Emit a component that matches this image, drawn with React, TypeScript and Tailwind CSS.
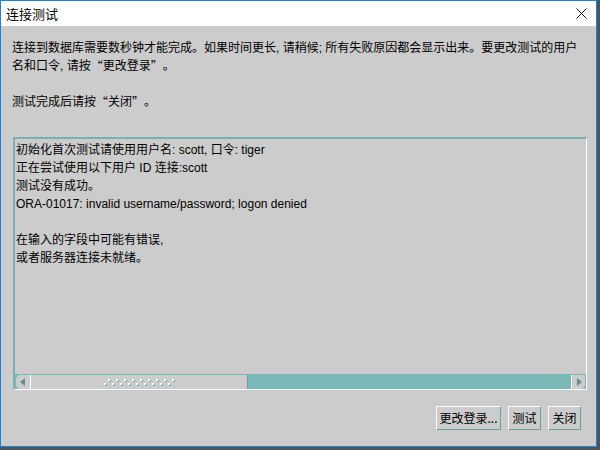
import React from "react";

const cjk = { fontFamily: '"Noto Sans CJK SC", "Liberation Sans", sans-serif' };
const mix = { fontFamily: '"Liberation Sans", "Noto Sans CJK SC", sans-serif' };

function Q({ children, open }: { children: React.ReactNode; open?: boolean }) {
  return (
    <span
      className={`inline-block w-[12px] h-[18px] leading-[18px] align-top overflow-hidden ${open ? "text-right" : "text-left"}`}
      style={cjk}
    >
      {children}
    </span>
  );
}

function Btn({ children, w }: { children: React.ReactNode; w: string }) {
  return (
    <button
      className={`${w} h-[24px] bg-[#cccccc] border border-t-white border-l-white border-b-[#6f9f9f] border-r-[#6f9f9f] text-[12px] text-black flex items-center justify-center leading-none`}
      style={cjk}
    >
      {children}
    </button>
  );
}

export default function App() {
  const dots = Array.from({ length: 9 });
  return (
    <div className="w-[600px] h-[450px] bg-[#4b555a] overflow-hidden">
      <div className="w-[597px] h-[447px] border border-[#1883d7] flex flex-col bg-[#cccccc]">
        {/* title bar */}
        <div className="h-[25px] bg-white flex items-center justify-between pl-[5px] pr-[9px] shrink-0">
          <span className="text-[13px] text-black leading-none" style={cjk}>连接测试</span>
          <svg width="11" height="11" viewBox="0 0 11 11">
            <path d="M0.5 0.5 L10.5 10.5 M10.5 0.5 L0.5 10.5" stroke="#111" strokeWidth="1" />
          </svg>
        </div>
        {/* body */}
        <div className="flex-1 flex flex-col pt-[13px]">
          <div className="pl-[11px] text-[12px] leading-[18px] text-black" style={mix}>
            <div className="h-[18px] whitespace-nowrap">连接到数据库需要数秒钟才能完成。如果时间更长, 请稍候; 所有失败原因都会显示出来。要更改测试的用户</div>
            <div className="h-[18px] whitespace-nowrap">名和口令, 请按<Q open>“</Q>更改登录<Q>”</Q>。</div>
            <div className="h-[18px]">&nbsp;</div>
            <div className="h-[18px] whitespace-nowrap">测试完成后请按<Q open>“</Q>关闭<Q>”</Q>。</div>
          </div>
          {/* text area */}
          <div className="ml-[12px] mt-[26px] w-[574px] h-[253px] flex flex-col border-t-2 border-l-2 border-t-[#79b1b0] border-l-[#79b1b0] border-b border-r border-b-white border-r-white">
            <div className="flex-1 pt-[2px] pl-[1px] text-[12px] leading-[18px] text-black" style={mix}>
              <div>初始化首次测试请使用用户名: scott, 口令: tiger</div>
              <div>正在尝试使用以下用户 ID 连接:scott</div>
              <div>测试没有成功。</div>
              <div>ORA-01017: invalid username/password; logon denied</div>
              <div>&nbsp;</div>
              <div>在输入的字段中可能有错误,</div>
              <div>或者服务器连接未就绪。</div>
            </div>
            <div className="h-[15px] flex shrink-0 border-t border-[#79b9b7] bg-[#79b9b7]">
              <div className="w-[15px] h-full bg-[#cccccc] rounded-l-[5px] border-l border-[#79b9b7] flex items-center justify-center">
                <svg width="6" height="8" viewBox="0 0 6 8"><path d="M5 0 L0 4 L5 8 Z" fill="#6a8e8e" /></svg>
              </div>
              <div className="w-[218px] h-full bg-[#cccccc] border-l border-white border-r border-r-[#7a9a9a] flex flex-col items-center justify-center gap-[2px]">
                <div className="flex gap-[6px] pl-[4px]">
                  {dots.map((_, i) => (
                    <span key={i} className="w-[2px] h-[2px] bg-white shadow-[1px_1px_0_#6fb0ae]" />
                  ))}
                </div>
                <div className="flex gap-[6px] pr-[4px]">
                  {dots.map((_, i) => (
                    <span key={i} className="w-[2px] h-[2px] bg-white shadow-[1px_1px_0_#6fb0ae]" />
                  ))}
                </div>
              </div>
              <div className="flex-1 bg-[#79b9b7]" />
              <div className="w-[14px] h-full bg-[#cccccc] border-l border-white rounded-br-[4px] flex items-center justify-center">
                <svg width="6" height="8" viewBox="0 0 6 8"><path d="M1 0 L6 4 L1 8 Z" fill="#6a8e8e" /></svg>
              </div>
              <div className="w-[1px]" />
            </div>
          </div>
          {/* buttons */}
          <div className="flex justify-end gap-[7px] pr-[15px] mt-[16px]">
            <Btn w="w-[65px]">更改登录...</Btn>
            <Btn w="w-[33px]">测试</Btn>
            <Btn w="w-[33px]">关闭</Btn>
          </div>
        </div>
      </div>
    </div>
  );
}
